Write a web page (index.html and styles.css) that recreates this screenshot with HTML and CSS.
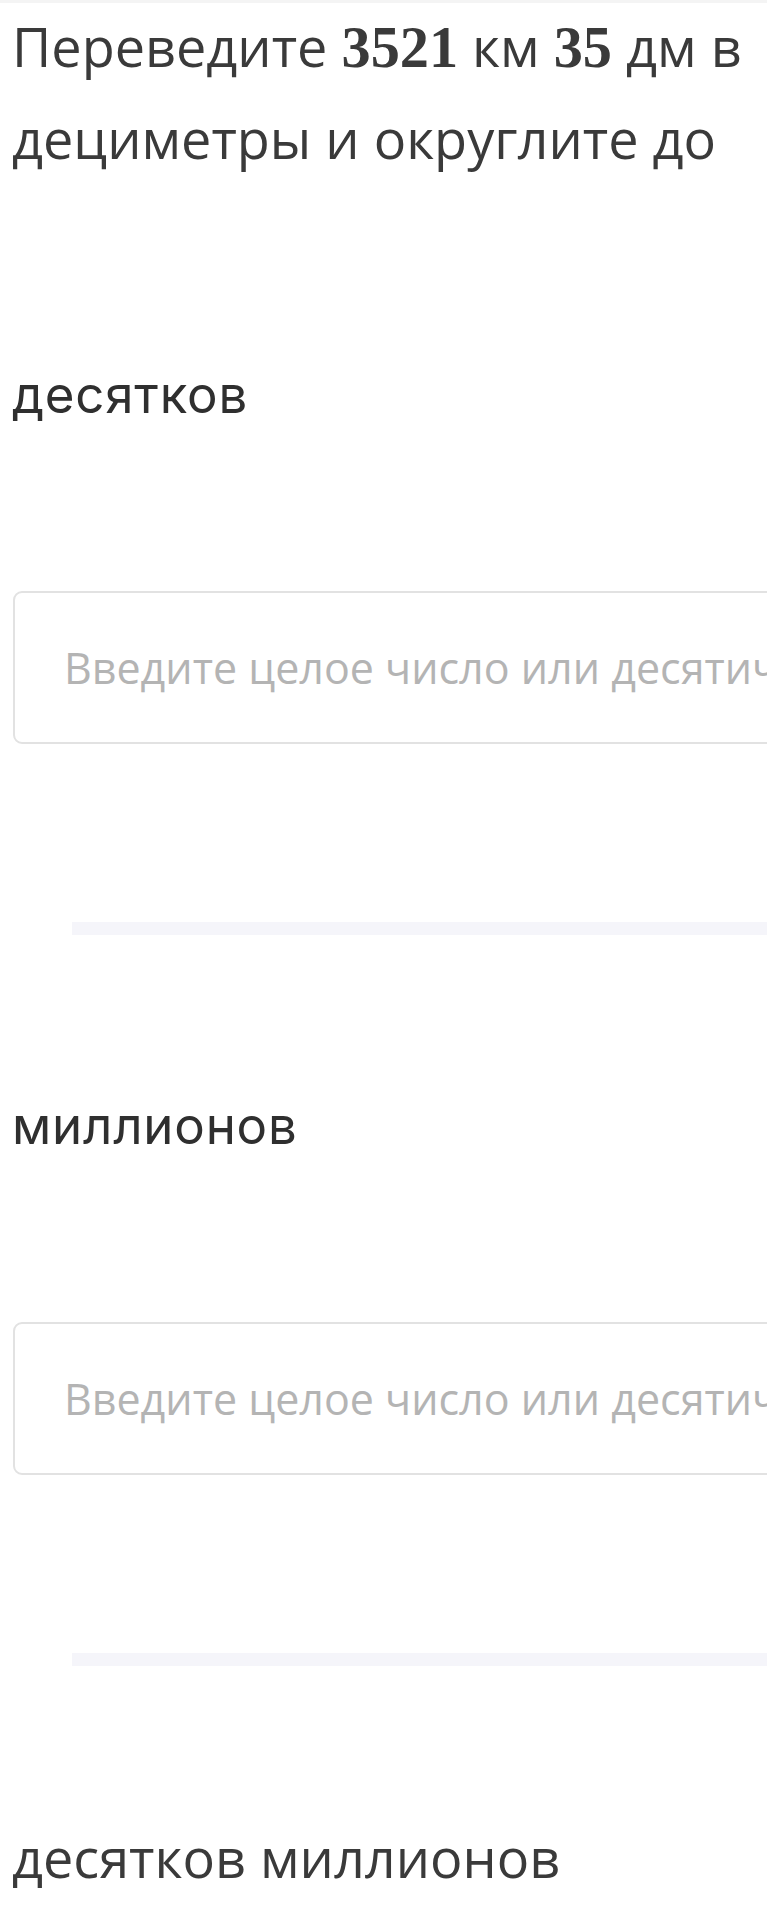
FILE: index.html
```html
<!DOCTYPE html>
<html lang="ru">
<head>
	<meta charset="utf-8">
	<title>Перевод единиц длины</title>
	<link rel="stylesheet" href="styles.css">
</head>
<body>
	<div class="header-shadow"></div>
	<div class="page">
		<h1 class="task">Переведите <span class="num">3521</span> км <span class="num">35</span> дм в дециметры и округлите до</h1>

		<div class="step">
			<div class="step-label">десятков</div>
			<input class="answer" type="text" inputmode="decimal" placeholder="Введите целое число или десятичную дробь">
			<div class="divider"></div>
		</div>

		<div class="step">
			<div class="step-label">миллионов</div>
			<input class="answer" type="text" inputmode="decimal" placeholder="Введите целое число или десятичную дробь">
			<div class="divider"></div>
		</div>

		<div class="step">
			<div class="step-label step-label-alt">десятков миллионов</div>
		</div>
	</div>
</body>
</html>
```

FILE: styles.css
```css
html, body { margin: 0; padding: 0; background: #fff; }
body { overflow: hidden; }

.header-shadow { position: absolute; top: 0; left: 0; right: 0; height: 3px; background: #f4f4f4; }

.page { padding: 0 0 0 12px; color: #3a3a3a; }

.task { margin: 0; font: 400 54px/92px "Open Sans", sans-serif; color: #3a3a3a; }
.task .num { font-family: "Liberation Serif", serif; font-weight: 700; font-size: 1.08em; line-height: 0; }

.step { padding-top: 180px; }
.step + .step { padding-top: 160px; }

.step-label { font: 400 51px/62px Inter, sans-serif; letter-spacing: 0.8px; color: #2f2f2f; }
.step-label-alt { font-family: "Open Sans", sans-serif; font-size: 54px; letter-spacing: 0; color: #3a3a3a; }

.answer {
	display: block; box-sizing: border-box;
	width: 900px; height: 153px; margin: 165px 0 0 1px; padding: 0 0 0 49px;
	border: 2px solid #e2e2e2; border-radius: 9px; background: #fff;
	font: 400 43px "Open Sans", sans-serif; color: #333; outline: none;
}
.answer::placeholder { color: #b4b4b4; }

.divider { width: 900px; height: 13px; margin: 178px 0 0 60px; background: #f5f5fa; }
```
